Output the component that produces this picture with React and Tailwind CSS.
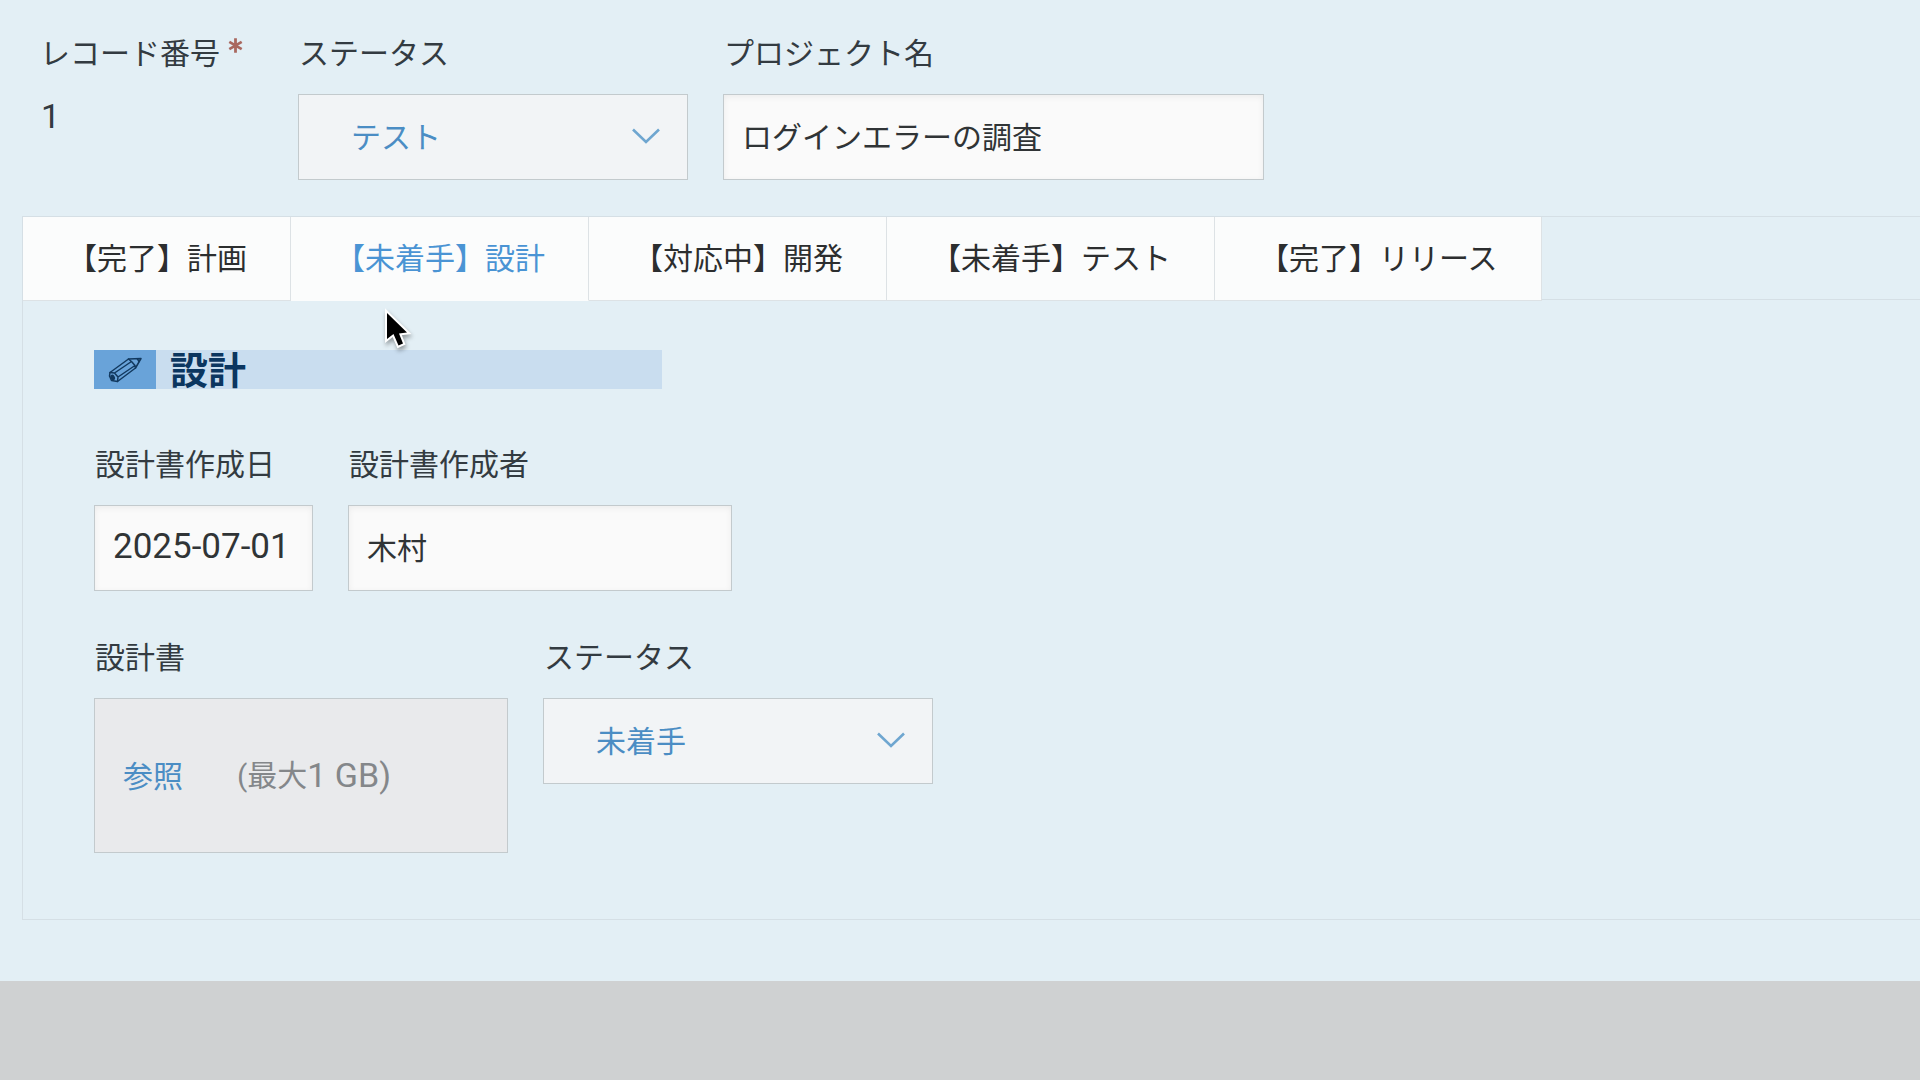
import { useState } from "react";

const INPUT =
  "h-[86px] w-full border border-[#c3cacd] bg-[#fafafa] px-[18px] pb-[5px] text-[30px] leading-[45px] text-[#303436] shadow-[inset_0_2px_6px_rgba(0,0,0,0.06)] outline-none";

function Field({ id, label, required, className, children }) {
  return (
    <div className={`flex flex-col gap-[20px] ${className}`}>
      <label htmlFor={id} className="flex pl-px text-[30px] leading-[45px] whitespace-nowrap text-[#333b41]">
        {label}
        {required && <Required />}
      </label>
      {children}
    </div>
  );
}

function Required() {
  return (
    <svg className="mt-[9px] ml-[8px] size-[15px]" viewBox="0 0 15 15" fill="none" stroke="#a9685f" strokeWidth="2.8" aria-label="必須">
      <path d="M7.5 0.3v14.4M1.3 3.9l12.4 7.2M13.7 3.9L1.3 11.1" />
    </svg>
  );
}

function StatusSelect({ id, value }) {
  const [status, setStatus] = useState(value);
  return (
    <div className="relative">
      <select
        id={id}
        value={status}
        onChange={(e) => setStatus(e.target.value)}
        className="block h-[86px] w-full appearance-none border border-[#c3cacd] bg-[#f2f4f6] pb-[3px] pl-[52px] text-[30px] leading-[45px] text-[#4b8dc4] outline-none"
      >
        {["未着手", "対応中", "テスト", "完了"].map((s) => (
          <option key={s}>{s}</option>
        ))}
      </select>
      <svg className="pointer-events-none absolute top-[33px] right-[27px] h-[18px] w-[30px]" viewBox="0 0 30 18" fill="none" stroke="#6fa6d0" strokeWidth="2.6">
        <path d="M2 2.5L15 15L28 2.5" />
      </svg>
    </div>
  );
}

const TABS = ["【完了】計画", "【未着手】設計", "【対応中】開発", "【未着手】テスト", "【完了】リリース"];

function Pencil() {
  return (
    <svg className="h-[30px] w-[36px]" viewBox="0 0 36 30" fill="none" stroke="#12395f" strokeWidth="1.5" strokeLinejoin="round" strokeLinecap="round">
      <path d="M3 17.5L21.5 4L34 3.5L28.5 13L10.5 26.5L4.5 25.5L2.5 21Z" />
      <path d="M3 17.5L7.5 18L11 22L10.5 26.5M7.5 18L24.5 6.5M11 22L28 10.5M21.5 4L24.5 6.5L28 10.5L28.5 13M30.5 4L32 6.5" />
      <ellipse cx="5.7" cy="22.5" rx="1.4" ry="2.2" fill="#12395f" transform="rotate(-25 5.7 22.5)" />
    </svg>
  );
}

function Cursor() {
  return (
    <svg className="pointer-events-none absolute top-[8px] left-[360px] h-[44px] w-[30px] drop-shadow-[1px_3px_2px_rgba(0,0,0,0.35)]" viewBox="0 0 30 44" fill="#000" stroke="#fff" strokeWidth="4" paintOrder="stroke">
      <path d="M4 5V31L10.5 26L15.5 37.5L20 35.5L16 25.5L24 24.5Z" />
    </svg>
  );
}

export default function App() {
  const [active, setActive] = useState(1);
  return (
    <div className="flex min-h-screen flex-col overflow-x-hidden bg-[#cfd1d2] font-['Noto_Sans_CJK_JP',sans-serif]">
      <main className="bg-[#e3eff5] pt-[29px] pb-[61px]">
        <div className="flex items-start gap-[35px] pl-10">
          <div className="w-[223px]">
            <div className="flex text-[30px] leading-[45px] whitespace-nowrap text-[#333b41]">
              レコード番号
              <Required />
            </div>
            <p className="mt-[20px] pl-px font-['Roboto',sans-serif] text-[34px] leading-[45px] text-[#333b41]">1</p>
          </div>
          <Field id="status" label="ステータス" className="w-[390px]">
            <StatusSelect id="status" value="テスト" />
          </Field>
          <Field id="project" label="プロジェクト名" className="w-[541px]">
            <input id="project" type="text" defaultValue="ログインエラーの調査" className={INPUT} />
          </Field>
        </div>

        <section className="mt-[36px] ml-[22px] border-y border-l border-[#d5dfe5]">
          <div role="tablist" className="flex h-[83px] border-b border-[#d5dfe5]">
            {TABS.map((t, i) => (
              <button
                key={t}
                type="button"
                role="tab"
                aria-selected={i === active}
                onClick={() => setActive(i)}
                className={`h-[84px] border-r border-b border-r-[#dde2e5] bg-[#fbfcfc] pr-[43px] pb-[5px] pl-[44px] text-[30px] leading-[45px] whitespace-nowrap ${
                  i === active ? "border-b-[#fbfcfc] text-[#4a94d4]" : "border-b-[#dde2e5] text-[#2c2e2f]"
                }`}
              >
                {t}
              </button>
            ))}
          </div>

          <div role="tabpanel" className="relative px-[71px] pt-[50px] pb-[66px]">
            <Cursor />
            <h2 className="flex h-[39px] w-[568px] items-center bg-[#c9ddef] text-[38px] leading-[39px] font-bold text-[#0b3660]">
              <span className="mr-[14px] flex h-full w-[62px] items-center justify-center bg-[#69a3d9]">
                <Pencil />
              </span>
              <span className="pb-[5px]">設計</span>
            </h2>
            <div className="mt-[51px] flex items-start gap-[35px]">
              <Field id="date" label="設計書作成日" className="w-[219px]">
                <input
                  id="date"
                  type="text"
                  defaultValue="2025-07-01"
                  className="h-[86px] w-full border border-[#c3cacd] bg-[#fafafa] px-[18px] pb-[3px] font-['Roboto',sans-serif] text-[35px] leading-[45px] text-[#303436] shadow-[inset_0_2px_6px_rgba(0,0,0,0.06)] outline-none"
                />
              </Field>
              <Field id="author" label="設計書作成者" className="w-[384px]">
                <input id="author" type="text" defaultValue="木村" className={INPUT} />
              </Field>
            </div>
            <div className="mt-[42px] flex items-start gap-[35px]">
              <Field id="file" label="設計書" className="w-[414px]">
                <div className="flex h-[155px] items-center gap-[54px] border border-[#c3cacd] bg-[#e9eaec] pl-[28px] text-[30px] leading-[45px]">
                  <button id="file" type="button" className="pb-[3px] text-[#4b8dc4]">
                    参照
                  </button>
                  <span className="flex items-center font-['Roboto','Noto_Sans_CJK_JP',sans-serif] text-[#84878a]">
                    (最大<span className="text-[34px]">1 GB)</span>
                  </span>
                </div>
              </Field>
              <Field id="design-status" label="ステータス" className="w-[390px]">
                <StatusSelect id="design-status" value="未着手" />
              </Field>
            </div>
          </div>
        </section>
      </main>
    </div>
  );
}
